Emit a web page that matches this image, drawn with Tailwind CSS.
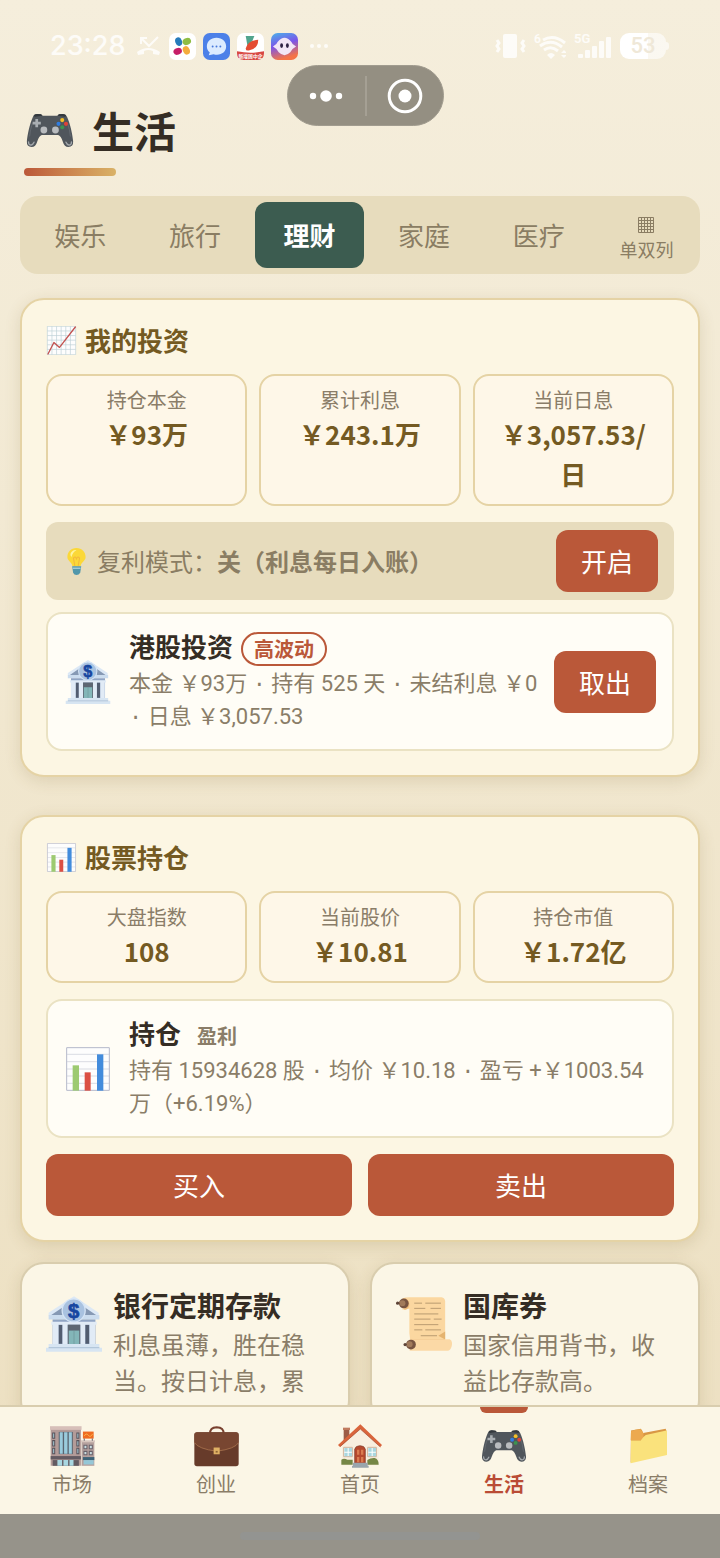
<!DOCTYPE html>
<html lang="zh-CN">
<head>
    <meta charset="UTF-8">
    <meta name="viewport" content="width=device-width, initial-scale=1.0">
    <title>生活</title>
    <script src="https://cdn.jsdelivr.net/npm/@tailwindcss/browser@4"></script>
</head>
<body class="h-screen flex flex-col bg-gradient-to-b from-[#f5eedc] to-[#ecdfc0] text-[#352d24] font-['Noto_Sans_CJK_SC',sans-serif]">

    <!-- Icon sprite -->
    <svg class="hidden">
        <symbol id="gamepad" viewBox="0 0 136 97">
            <path fill="#50565c" d="M18 8Q20 1 30 0L42 1Q44 5 48 5H88Q92 5 94 1L106 0Q114 1 118 8C128 30 134 60 136 80Q137 96 122 97Q110 96 106 82Q100 64 92 62H44Q36 64 30 82Q26 96 14 97Q-1 96 0 80C2 60 8 30 18 8Z"/>
            <path fill="#33383d" d="M20 6Q22 0 30 0L42 1L45 5L24 8ZM116 6Q114 0 106 0L94 1L91 5L112 8Z"/>
            <path fill="none" stroke="#a3a8ac" stroke-width="4" stroke-linecap="round" d="M5 82Q5 92 13 91Q18 90 21 83M131 82Q131 92 123 91Q118 90 115 83"/>
            <path fill="none" stroke="#6b7278" stroke-width="2" d="M8 66Q10 44 17 26M128 66Q126 44 119 26"/>
            <path fill="#a9aeb2" d="M25 15h8v8h8v8h-8v8h-8v-8h-8v-8h8z"/>
            <circle cx="50" cy="47" r="10" fill="#b9bcbf"/><circle cx="84" cy="47" r="10" fill="#b9bcbf"/>
            <circle cx="104" cy="18" r="6" fill="#f5bf26"/><circle cx="93" cy="29" r="6" fill="#2f7de1"/>
            <circle cx="115" cy="29" r="6" fill="#e04338"/><circle cx="104" cy="39" r="6" fill="#3c9350"/>
        </symbol>
        <symbol id="trend" viewBox="0 0 88 88">
            <path fill="#fdfdfd" d="M1 1h86v86H1z"/>
            <path fill="none" stroke="#bccfd6" stroke-width="2" d="M1 1h86v86H1zM15 1v86M29 1v86M43 1v86M57 1v86M71 1v86M1 15h86M1 29h86M1 43h86M1 57h86M1 71h86"/>
            <path fill="none" stroke="#c2514f" stroke-width="4" stroke-linecap="round" stroke-linejoin="round" d="M3 85L21 50L38 65L86 3"/>
        </symbol>
        <symbol id="bars" viewBox="0 0 132 132">
            <path fill="#fdfdfd" stroke="#b5b8ca" stroke-width="3" d="M2 2h128v128H2z"/>
            <path stroke="#c8cbd6" stroke-width="2" d="M3 22h126M3 44h126M3 66h126M3 87h126M3 109h126"/>
            <path fill="#9dca71" d="M20 55h19v76H20z"/><path fill="#db4f43" d="M56 76h18v55H56z"/><path fill="#438cdc" d="M93 22h19v109H93z"/>
        </symbol>
        <symbol id="bulb" viewBox="0 0 54 80">
            <path fill="#fbd838" d="M27 0C10 0 0 12 0 27C0 39 13 42 15 54H39C41 42 54 39 54 27C54 12 43 0 27 0Z"/>
            <path fill="#fff4a0" d="M12 12Q18 4 27 6Q16 12 12 27Q6 20 12 12Z"/>
            <path fill="none" stroke="#f3b73c" stroke-width="3" d="M22 53L18 30Q24 22 27 32Q30 22 36 30L32 53"/>
            <path fill="#5197ab" d="M14 54H41L38 73Q34 80 27 80Q20 80 17 73Z"/>
            <path stroke="#a9cfda" stroke-width="4" d="M16 60h23"/>
        </symbol>
        <symbol id="bank" viewBox="0 0 170 168">
            <path fill="#dce8f5" d="M85 0L160 50V58H8V50Z"/>
            <path fill="#8699b4" d="M16 57L60 27L66 57ZM152 57L108 27L102 57Z"/>
            <path fill="#cbdcee" d="M8 57H162V70H8Z"/>
            <path fill="#90a5c4" d="M20 70H150V145H20Z"/>
            <path fill="#525d70" d="M38 86h12v58H38zM119 86h12v58h-12z"/>
            <path fill="#e1ebf6" d="M20 84h18v61H20zM50 84h16v61H50zM104 84h15v61h-15zM132 84h17v61h-17zM16 77h138v9H16z"/>
            <path fill="#5d6672" d="M66 86h38v59H66z"/><path fill="#83b6b8" d="M69 104h32v41H69z"/><path stroke="#6b9497" stroke-width="2" d="M85 104v41"/>
            <path fill="#d7e5f2" d="M8 145H162V156H8ZM0 156H170V168H0Z"/><path stroke="#a9bed4" stroke-width="3" d="M8 156h154"/>
            <circle cx="84" cy="43" r="35" fill="#a9c2e0" stroke="#d6e5f6" stroke-width="4"/>
            <text x="84" y="65" text-anchor="middle" font-family="Liberation Sans" font-weight="700" font-size="62" fill="#1746a0" stroke="#1746a0" stroke-width="2">$</text>
        </symbol>
        <symbol id="scroll" viewBox="0 0 172 164">
            <path fill="#fbd7a0" d="M20 3Q30 0 40 0H140Q150 2 151 12V134H44L41 110V35L20 38Z"/>
            <path fill="#efbd7a" d="M22 4Q38 2 41 20Q42 36 26 39Z"/>
            <path fill="#e4b36f" d="M44 128H148L130 118L151 105V134H44Z"/>
            <path fill="#fbd9a6" d="M42 129H165Q175 134 171 150Q168 163 158 164H42Z"/>
            <path stroke="#b89a70" stroke-width="3" d="M56 18h24M90 18h48M56 34h34M106 34h32M56 51h74M56 67h50M116 67h24M56 84h74M56 100h25M90 100h48M76 118h50"/>
            <circle cx="24" cy="19" r="15" fill="#795541"/><circle cx="46" cy="145" r="15" fill="#795541"/>
            <circle cx="20" cy="18" r="9" fill="#a27b5b"/><circle cx="42" cy="144" r="9" fill="#a27b5b"/>
            <circle cx="5" cy="18" r="5" fill="#5d4336"/><circle cx="28" cy="145" r="5" fill="#5d4336"/>
        </symbol>
        <symbol id="store" viewBox="0 0 134 118">
            <path fill="#b39b98" d="M2 8h90v110H2z"/><path fill="#d7bfb9" d="M0 0h94v11H0z"/>
            <path fill="#5a6570" d="M26 17h42v66H26z"/><path fill="#9acbdc" d="M29 18h9v64h-9zM42 18h10v64H42zM56 18h9v64h-9z"/>
            <path fill="#a6cdd8" stroke="#58525a" stroke-width="3" d="M8 20h6v16H8zM8 43h6v16H8zM8 66h6v16H8zM80 20h6v16h-6zM80 43h6v16h-6zM80 66h6v16h-6z"/>
            <path fill="#635b62" d="M2 89h90v10H2z"/><path fill="#635b62" d="M8 101h78v17H8z"/><path fill="#a9d7e1" d="M22 101h14v17H22zM40 101h14v17H40zM58 101h12v17H58z"/>
            <path fill="#b5a19e" d="M94 44h38v74H94z"/><path fill="#d8c7bf" d="M92 42h42v6H92z"/>
            <path fill="#ef6c21" d="M98 16h32v21H98z"/><path fill="none" stroke="#ffd65c" stroke-width="2" d="M102 29Q108 19 114 27T127 23"/>
            <path stroke="#68616a" stroke-width="3" d="M102 37v6M126 37v6"/>
            <path fill="#c9dce0" stroke="#68616a" stroke-width="3" d="M101 57h9v10h-9zM117 57h9v10h-9zM101 75h9v10h-9zM117 75h9v10h-9z"/>
            <path fill="#3d6377" d="M98 92h34v9H98z"/><path fill="#95c7d7" d="M100 101h30v13h-30z"/>
        </symbol>
        <symbol id="briefcase" viewBox="0 0 133 119">
            <path fill="none" stroke="#79412f" stroke-width="6" d="M48 23Q46 5 67 4Q89 5 87 23"/>
            <rect x="1" y="19" width="131" height="100" rx="8" fill="#673b2a"/>
            <path fill="#784631" d="M1 27Q1 19 9 19H124Q132 19 132 27V49Q122 68 67 75Q12 68 1 49Z"/>
            <path fill="none" stroke="#b37d54" stroke-width="2" d="M1 49Q12 68 67 75Q122 68 132 49"/>
            <rect x="58" y="64" width="18" height="20" fill="#dfb064"/><path fill="#8f6434" d="M64 74h6v5h-6z"/>
        </symbol>
        <symbol id="house" viewBox="0 0 132 130">
            <path fill="#9c5c46" d="M17 11h17v40H17z"/><path fill="#c07a5e" d="M15 10h21v7H15z"/>
            <path fill="#f8efdf" d="M12 61L67 5L122 61V123H12Z"/>
            <path fill="#d9653c" d="M67 0L132 62L127 68L67 14L6 68L0 62Z"/><path fill="none" stroke="#a44a31" stroke-width="2" d="M6 67L67 14L127 68"/>
            <path fill="#fff" stroke="#cfb29a" stroke-width="3" d="M17 69h26v28H17zM89 69h26v28H89z"/>
            <path fill="#a9d7df" d="M19 71h10v11H19zM32 71h10v11H32zM19 85h10v11H19zM32 85h10v11H32zM91 71h10v11H91zM104 71h10v11h-10zM91 85h10v11H91zM104 85h10v11h-10z"/>
            <path fill="#b6492d" stroke="#7e3b2b" stroke-width="2" d="M50 120V75Q52 64 66 64Q80 64 82 75V120Z"/><path fill="#da7c50" d="M57 76h7v15h-7zM69 76h7v15h-7zM57 98h7v16h-7zM69 98h7v16h-7z"/>
            <path fill="#758746" d="M10 106Q18 100 28 106H44V121H10ZM88 121V107Q98 100 110 101Q122 104 122 121Z"/>
            <path fill="#9aa5ac" d="M45 115H89V124H92V130H42V124H45Z"/>
        </symbol>
        <symbol id="folder" viewBox="0 0 110 102">
            <path fill="#d99744" d="M3 5L32 0Q36 3 39 12L106 0L109 8V70L2 100Z"/>
            <path fill="#eca94f" d="M3 7Q15 1 32 1L40 13V34H2Z"/>
            <path fill="#fae27c" d="M3 35H32Q40 22 47 18L108 5Q110 5 110 8V78L2 102Z"/>
        </symbol>
    </svg>

    <!-- Status bar -->
    <div class="shrink-0 h-[92px] pl-[50px] pr-[51px] flex items-center justify-between text-white/80">
        <div class="flex items-center gap-[7px]">
            <span class="w-[79px] text-[27px] leading-8 font-medium font-['Inter',sans-serif]">23:28</span>
            <svg class="w-[25px] h-5 mr-[1px]" viewBox="0 0 25 20" fill="none" stroke="currentColor" stroke-width="2"><path d="M5 8V2h6M5 2l8 8L22 1"/><path fill="currentColor" stroke="none" d="M1 16Q12 8 24 16L23 19L17 18V15Q12 13 8 15V18L2 19Z"/></svg>
            <svg class="size-[27px]" viewBox="0 0 28 28"><rect width="28" height="28" rx="7" fill="#fff"/><ellipse cx="10" cy="9" rx="3.5" ry="4.5" fill="#267bbb" transform="rotate(-20 10 9)"/><ellipse cx="18.5" cy="9" rx="4.5" ry="3.5" fill="#8fbd44" transform="rotate(-20 18 9)"/><ellipse cx="9" cy="19" rx="4.5" ry="3.5" fill="#c61e67" transform="rotate(-20 9 19)"/><ellipse cx="18" cy="18" rx="3.5" ry="4.5" fill="#f4ac3d" transform="rotate(-25 18 18)"/></svg>
            <svg class="size-[27px]" viewBox="0 0 28 28"><rect width="28" height="28" rx="7" fill="#4c80e8"/><path fill="#dcebff" d="M14 5C8 5 4 9 4 14Q4 18 7 20L6 23L11 22C18 24 24 20 24 14C24 9 20 5 14 5Z"/><circle cx="10" cy="14" r="1" fill="#4778db"/><circle cx="14" cy="14" r="1" fill="#4778db"/><circle cx="18" cy="14" r="1" fill="#4778db"/></svg>
            <svg class="size-[27px]" viewBox="0 0 28 28"><rect width="28" height="28" rx="7" fill="#fff"/><path fill="#51a48d" d="M9 3h9L16 8 11 14Z"/><path fill="#e44c32" d="M9 16Q11 8 22 7Q22 16 13 18Q9 19 9 16Z"/><path fill="#d84843" d="M0 19Q14 22 28 19V21Q28 28 21 28H7Q0 28 0 21Z"/><text x="14" y="26" text-anchor="middle" font-size="5" font-weight="700" fill="#fff">新增国中企</text></svg>
            <svg class="size-[27px]" viewBox="0 0 28 28"><defs><linearGradient id="avatar" x1="0" y1="0" x2=".3" y2="1"><stop stop-color="#4bb2e9"/><stop offset=".5" stop-color="#7a55e9"/><stop offset="1" stop-color="#f57447"/></linearGradient></defs><rect width="28" height="28" rx="7" fill="url(#avatar)"/><path fill="#f2e6f6" d="M2 14Q6 12 7 9Q14 1 21 9Q22 12 26 14Q22 16 20 20Q14 26 8 20Q6 16 2 14Z"/><ellipse cx="11" cy="13" rx="1.5" ry="2.5" fill="#302445"/><ellipse cx="17" cy="13" rx="1.5" ry="2.5" fill="#302445"/></svg>
            <svg class="w-5 h-2 ml-1" viewBox="0 0 20 8" fill="currentColor"><circle cx="3" cy="4" r="2"/><circle cx="10" cy="4" r="2"/><circle cx="17" cy="4" r="2"/></svg>
        </div>
        <div class="flex items-center gap-2">
            <svg class="w-[31px] h-6" viewBox="0 0 31 24" fill="none" stroke="currentColor" stroke-width="2"><rect x="8" y="0" width="14" height="24" rx="2" fill="currentColor" stroke="none"/><path stroke-width="3" d="M2 6l2 3-2 3 2 3-2 3M29 6l-2 3 2 3-2 3 2 3"/></svg>
            <svg class="w-8 h-[30px]" viewBox="0 -3 32 30" fill="none" stroke="currentColor" stroke-width="3"><text x="0" y="9" font-family="Roboto" font-size="12" font-weight="600" fill="currentColor" stroke="none">6</text><path d="M9 6Q20 0 31 9M6 12Q17 4 28 13M10 16Q17 11 24 17"/><path fill="currentColor" stroke="none" d="M13 21Q17 17 21 21L17 25ZM27 19l3-3 3 3zM27 21l3 3 3-3z"/></svg>
            <svg class="w-[38px] h-[30px]" viewBox="0 -3 38 30" fill="currentColor"><text x="0" y="9" font-family="Roboto" font-size="13" font-weight="600">5G</text><rect x="4" y="20" width="5" height="4" rx="1"/><rect x="11" y="16" width="5" height="8" rx="1"/><rect x="18" y="12" width="5" height="12" rx="1"/><rect x="25" y="7" width="5" height="17" rx="1"/><rect x="32" y="3" width="5" height="21" rx="1"/></svg>
            <div class="flex items-center">
                <span class="w-[46px] h-[26px] rounded-[9px] bg-gradient-to-r from-white from-60% to-white/60 to-60% text-center text-[22px] leading-[26px] font-medium text-[#efe8d8] font-['Roboto',sans-serif]">53</span>
                <span class="w-[3px] h-2 rounded-r bg-white/60"></span>
            </div>
        </div>
    </div>

    <!-- Mini program capsule, floats over the page -->
    <div class="absolute top-[65px] left-[287px] w-[157px] h-[61px] rounded-full border border-[#a19c8f] bg-[#948f82] flex items-center">
        <button class="flex-1 flex justify-center" aria-label="更多">
            <svg class="w-[34px] h-3" viewBox="0 0 34 12" fill="#fff"><circle cx="4" cy="6" r="3.2"/><circle cx="17" cy="6" r="5.8"/><circle cx="30" cy="6" r="3.2"/></svg>
        </button>
        <span class="w-[2px] h-10 bg-[#a5a094]"></span>
        <button class="flex-1 flex justify-center" aria-label="关闭">
            <svg class="size-9" viewBox="0 0 36 36"><circle cx="18" cy="18" r="15.8" fill="none" stroke="#fff" stroke-width="3"/><circle cx="18" cy="18" r="6.5" fill="#fff"/></svg>
        </button>
    </div>

    <main class="flex-1 min-h-0 overflow-y-auto [scrollbar-width:none] px-5">
        <header class="mt-2 mb-5 px-1">
            <h1 class="flex items-center gap-4 text-[42px] leading-[60px] font-bold">
                <svg class="w-[52px] h-[33px]"><use href="#gamepad"/></svg>
                生活
            </h1>
            <div class="mt-2 w-[92px] h-2 rounded-full bg-gradient-to-r from-[#bb5839] to-[#d9b267]"></div>
        </header>

        <!-- Tabs -->
        <div class="flex gap-[6px] p-[6px] rounded-[18px] bg-[#e7dcbd] text-[26px] leading-[66px] text-[#8a7d63]">
            <button class="flex-1">娱乐</button>
            <button class="flex-1">旅行</button>
            <button class="flex-1 rounded-xl bg-[#3c5c50] font-bold text-white">理财</button>
            <button class="flex-1">家庭</button>
            <button class="flex-1">医疗</button>
            <button class="w-[95px] flex flex-col items-center justify-center gap-1 text-lg leading-6">
                <svg class="size-4 mt-2" viewBox="0 0 16 16" fill="none" stroke="currentColor"><path d="M.5.5h15v15H.5zM3.5.5v15M6.5.5v15M9.5.5v15M12.5.5v15M.5 3.5h15M.5 6.5h15M.5 9.5h15M.5 12.5h15"/></svg>
                单双列
            </button>
        </div>

        <!-- Investments -->
        <section class="mt-6 p-6 rounded-3xl border-2 border-[#e5d3a5] bg-[#fcf6e3] shadow-[0_4px_16px_rgba(120,95,40,0.16)]">
            <h2 class="flex items-center gap-2 mb-[18px] text-[26px] leading-8 font-bold text-[#745a22]">
                <svg class="w-[31px] h-[29px]"><use href="#trend"/></svg>
                我的投资
            </h2>
            <div class="grid grid-cols-3 gap-3 text-center">
                <div class="px-5 py-[10px] rounded-2xl border-2 border-[#e5d3a5] bg-[#fef7e8]">
                    <div class="text-xl leading-7 text-[#8a7d68]">持仓本金</div>
                    <div class="text-[26px] leading-10 font-bold text-[#745a22]">￥93万</div>
                </div>
                <div class="px-5 py-[10px] rounded-2xl border-2 border-[#e5d3a5] bg-[#fef7e8]">
                    <div class="text-xl leading-7 text-[#8a7d68]">累计利息</div>
                    <div class="text-[26px] leading-10 font-bold text-[#745a22]">￥243.1万</div>
                </div>
                <div class="px-5 py-[10px] rounded-2xl border-2 border-[#e5d3a5] bg-[#fef7e8]">
                    <div class="text-xl leading-7 text-[#8a7d68]">当前日息</div>
                    <div class="text-[26px] leading-10 font-bold text-[#745a22]">￥3,057.53/<br>日</div>
                </div>
            </div>
            <div class="mt-4 px-4 py-2 flex items-center rounded-xl bg-[#e7dcbd] text-2xl text-[#8a7d63]">
                <svg class="w-[29px] h-[27px] mr-[6px]"><use href="#bulb"/></svg>
                <p class="flex-1">复利模式：<b>关（利息每日入账）</b></p>
                <button class="px-[25px] rounded-xl bg-[#ba5839] text-[26px] leading-[62px] text-white">开启</button>
            </div>
            <div class="mt-3 p-4 flex items-center rounded-2xl border-2 border-[#eae2c3] bg-[#fffdf6]">
                <svg class="shrink-0 w-12 h-11 mr-[17px]"><use href="#bank"/></svg>
                <div class="flex-1 font-['Roboto','Noto_Sans_CJK_SC',sans-serif]">
                    <h3 class="flex items-center gap-2 text-[26px] leading-[37px] font-bold">港股投资
                        <span class="px-[11px] rounded-full border-2 border-[#ba5839] text-xl leading-[30px] font-['Noto_Sans_CJK_SC',sans-serif] text-[#ba5839]">高波动</span>
                    </h3>
                    <p class="text-[22px] leading-[33px] text-[#8a7d68]">本金 ￥93万 <span class="leading-none font-['Liberation_Mono',monospace]">·</span> 持有 525 天 <span class="leading-none font-['Liberation_Mono',monospace]">·</span> 未结利息 ￥0 <span class="leading-none font-['Liberation_Mono',monospace]">·</span> 日息 ￥3,057.53</p>
                </div>
                <button class="shrink-0 ml-2 px-[25px] rounded-xl bg-[#ba5839] text-[26px] leading-[62px] text-white">取出</button>
            </div>
        </section>

        <!-- Stocks -->
        <section class="mt-[38px] p-6 rounded-3xl border-2 border-[#e5d3a5] bg-[#fcf6e3] shadow-[0_4px_16px_rgba(120,95,40,0.16)]">
            <h2 class="flex items-center gap-2 mb-[18px] text-[26px] leading-8 font-bold text-[#745a22]">
                <svg class="w-[31px] h-[29px]"><use href="#bars"/></svg>
                股票持仓
            </h2>
            <div class="grid grid-cols-3 gap-3 text-center">
                <div class="px-5 py-[10px] rounded-2xl border-2 border-[#e5d3a5] bg-[#fef7e8]">
                    <div class="text-xl leading-7 text-[#8a7d68]">大盘指数</div>
                    <div class="text-[26px] leading-10 font-bold text-[#745a22]">108</div>
                </div>
                <div class="px-5 py-[10px] rounded-2xl border-2 border-[#e5d3a5] bg-[#fef7e8]">
                    <div class="text-xl leading-7 text-[#8a7d68]">当前股价</div>
                    <div class="text-[26px] leading-10 font-bold text-[#745a22]">￥10.81</div>
                </div>
                <div class="px-5 py-[10px] rounded-2xl border-2 border-[#e5d3a5] bg-[#fef7e8]">
                    <div class="text-xl leading-7 text-[#8a7d68]">持仓市值</div>
                    <div class="text-[26px] leading-10 font-bold text-[#745a22]">￥1.72亿</div>
                </div>
            </div>
            <div class="mt-4 p-4 flex items-center rounded-2xl border-2 border-[#eae2c3] bg-[#fffdf6]">
                <svg class="shrink-0 w-12 h-11 mr-[17px]"><use href="#bars"/></svg>
                <div class="flex-1 font-['Roboto','Noto_Sans_CJK_SC',sans-serif]">
                    <h3 class="flex items-center gap-4 text-[26px] leading-[37px] font-bold">持仓
                        <span class="text-xl leading-[37px] font-['Noto_Sans_CJK_SC',sans-serif] text-[#8a7d68]">盈利</span>
                    </h3>
                    <p class="text-[22px] leading-[33px] text-[#8a7d68]">持有 15934628 股 <span class="leading-none font-['Liberation_Mono',monospace]">·</span> 均价 ￥10.18 <span class="leading-none font-['Liberation_Mono',monospace]">·</span> 盈亏 +￥1003.54万（+6.19%）</p>
                </div>
            </div>
            <div class="mt-4 grid grid-cols-2 gap-4 text-[26px] leading-[62px] text-white">
                <button class="rounded-xl bg-[#ba5839]">买入</button>
                <button class="rounded-xl bg-[#ba5839]">卖出</button>
            </div>
        </section>

        <!-- Products -->
        <section class="mt-5 grid grid-cols-2 gap-5 pb-6">
            <div class="p-6 flex gap-[11px] rounded-3xl border-2 border-[#d9cdae] bg-[#fbf6e6] shadow-[0_4px_16px_rgba(120,95,40,0.16)]">
                <svg class="shrink-0 size-14 mt-2"><use href="#bank"/></svg>
                <div>
                    <h3 class="mb-1 text-[28px] leading-[34px] font-bold">银行定期存款</h3>
                    <p class="text-2xl leading-9 text-[#8a7d68]">利息虽薄，胜在稳当。按日计息，累</p>
                </div>
            </div>
            <div class="p-6 flex gap-[11px] rounded-3xl border-2 border-[#d9cdae] bg-[#fbf6e6] shadow-[0_4px_16px_rgba(120,95,40,0.16)]">
                <svg class="shrink-0 size-14 mt-2"><use href="#scroll"/></svg>
                <div>
                    <h3 class="mb-1 text-[28px] leading-[34px] font-bold">国库券</h3>
                    <p class="text-2xl leading-9 text-[#8a7d68]">国家信用背书，收益比存款高。</p>
                </div>
            </div>
        </section>
    </main>

    <!-- Bottom nav -->
    <nav class="relative shrink-0 grid grid-cols-5 border-t-2 border-[#d9cdae] bg-[#fbf6e6] text-xl leading-7 text-[#8a7d68]">
        <a href="#" class="flex flex-col items-center pt-[15px] pb-4"><svg class="w-[45px] h-12"><use href="#store"/></svg>市场</a>
        <a href="#" class="flex flex-col items-center pt-[15px] pb-4"><svg class="w-[45px] h-12"><use href="#briefcase"/></svg>创业</a>
        <a href="#" class="flex flex-col items-center pt-[15px] pb-4"><svg class="w-11 h-12"><use href="#house"/></svg>首页</a>
        <a href="#" class="relative flex flex-col items-center pt-[15px] pb-4 font-bold text-[#ba4c35]">
            <span class="absolute top-0 w-12 h-[6px] rounded-b-md bg-[#ba5839]"></span>
            <svg class="w-11 h-12"><use href="#gamepad"/></svg>生活</a>
        <a href="#" class="flex flex-col items-center pt-[15px] pb-4"><svg class="w-[37px] h-12"><use href="#folder"/></svg>档案</a>
    </nav>
    <div class="shrink-0 h-11 flex items-center justify-center bg-[#96938a]">
        <span class="w-60 h-2 rounded-full bg-[#939491]"></span>
    </div>
</body>
</html>
